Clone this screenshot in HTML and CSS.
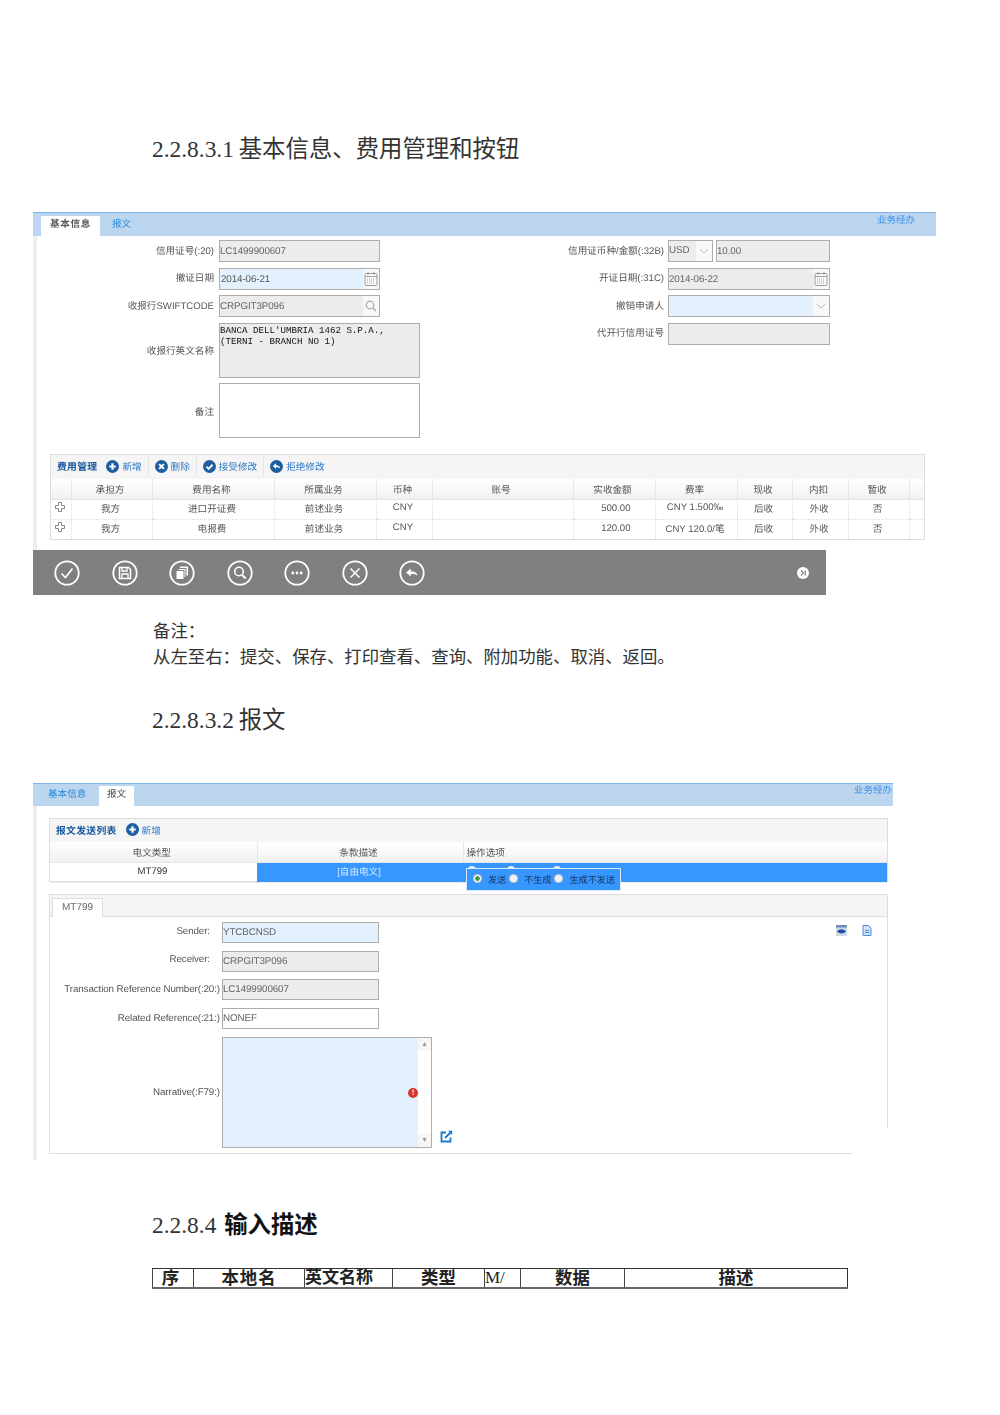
FILE: index.html
```html
<!DOCTYPE html>
<html lang="zh">
<head>
<meta charset="utf-8">
<title>2.2.8.3 基本信息</title>
<link rel="stylesheet" href="styles.css">
</head>
<body>
<svg class="sprite" width="0" height="0" aria-hidden="true">
  <defs>
    <symbol id="add" viewBox="0 0 12 12"><circle cx="6" cy="6" r="6" fill="#1f5e9e"/><path d="M6 3v6M3 6h6" stroke="#fff" stroke-width="2"/></symbol>
    <symbol id="del" viewBox="0 0 12 12"><circle cx="6" cy="6" r="6" fill="#1f5e9e"/><path d="M3.8 3.8l4.4 4.4M8.2 3.8l-4.4 4.4" stroke="#fff" stroke-width="1.8"/></symbol>
    <symbol id="ok" viewBox="0 0 12 12"><circle cx="6" cy="6" r="6" fill="#1f5e9e"/><path d="M3.2 6.2l2 2 3.6-4" fill="none" stroke="#fff" stroke-width="1.7"/></symbol>
    <symbol id="rej" viewBox="0 0 12 12"><circle cx="6" cy="6" r="6" fill="#1f5e9e"/><path d="M2.6 5.6L5.6 3v1.8c2.2 0 3.6 1 3.8 3-1-1-2.2-1.2-3.8-1.2V8.4z" fill="#fff"/></symbol>
    <symbol id="cal" viewBox="0 0 14 15"><rect x="1" y="2.5" width="12" height="12" rx="1" fill="#fff" stroke="#999"/><path d="M1 5.5h12" stroke="#999"/><path d="M4 1v3M10 1v3" stroke="#999"/><path d="M3 8h8M3 10h8M3 12h8" stroke="#999" stroke-dasharray="1 1"/></symbol>
    <symbol id="glass" viewBox="0 0 12 12"><circle cx="5" cy="5" r="3.8" fill="none" stroke="#aaa" stroke-width="1.2"/><path d="M8 8l3 3" stroke="#aaa" stroke-width="1.6"/></symbol>
    <symbol id="chev" viewBox="0 0 10 6"><path d="M1 1l4 4 4-4" fill="none" stroke="#bbb" stroke-width="1"/></symbol>
    <symbol id="plus" viewBox="0 0 10 10"><path d="M3.5.5h3v3h3v3h-3v3h-3v-3h-3v-3h3z" fill="#fff" stroke="#888"/></symbol>
    <symbol id="a-ok" viewBox="0 0 26 26"><circle cx="13" cy="13" r="11.7" fill="none" stroke="#fff" stroke-width="1.8"/><path d="M7.5 13.5l4 4 7-9" fill="none" stroke="#fff" stroke-width="1.6"/></symbol>
    <symbol id="a-save" viewBox="0 0 26 26"><circle cx="13" cy="13" r="11.7" fill="none" stroke="#fff" stroke-width="1.8"/><path d="M7.5 7.5h9l2 2v9h-11z" fill="none" stroke="#fff" stroke-width="1.5"/><path d="M10 7.5v3.5h5V7.5M10 18.5v-4.5h6v4.5" fill="none" stroke="#fff" stroke-width="1.3"/></symbol>
    <symbol id="a-print" viewBox="0 0 26 26"><circle cx="13" cy="13" r="11.7" fill="none" stroke="#fff" stroke-width="1.8"/><rect x="11" y="6.5" width="8" height="9" fill="#fff"/><rect x="9" y="8.5" width="8" height="9" fill="#fff" stroke="#808080"/><rect x="7" y="10.5" width="8" height="9" fill="#fff" stroke="#808080"/></symbol>
    <symbol id="a-find" viewBox="0 0 26 26"><circle cx="13" cy="13" r="11.7" fill="none" stroke="#fff" stroke-width="1.8"/><circle cx="12" cy="11.5" r="4.3" fill="none" stroke="#fff" stroke-width="1.6"/><path d="M15 15l3.8 3.6" stroke="#fff" stroke-width="2"/></symbol>
    <symbol id="a-more" viewBox="0 0 26 26"><circle cx="13" cy="13" r="11.7" fill="none" stroke="#fff" stroke-width="1.8"/><circle cx="8.8" cy="13" r="1.4" fill="#fff"/><circle cx="13" cy="13" r="1.4" fill="#fff"/><circle cx="17.2" cy="13" r="1.4" fill="#fff"/></symbol>
    <symbol id="a-x" viewBox="0 0 26 26"><circle cx="13" cy="13" r="11.7" fill="none" stroke="#fff" stroke-width="1.8"/><path d="M8.5 8.5l9 9M17.5 8.5l-9 9" stroke="#fff" stroke-width="1.5"/></symbol>
    <symbol id="a-back" viewBox="0 0 26 26"><circle cx="13" cy="13" r="11.7" fill="none" stroke="#fff" stroke-width="1.8"/><path d="M7 12.5l4.8-4v2.8c3.6 0 6.2 1.4 7 4.4-1.6-1.4-3.6-1.8-7-1.8v2.6z" fill="#fff"/></symbol>
    <symbol id="a-next" viewBox="0 0 12 12"><circle cx="6" cy="6" r="6" fill="#fff"/><path d="M4 3.5L6.5 6 4 8.5M8.3 3.5v5" fill="none" stroke="#808080" stroke-width="1.2"/></symbol>
    <symbol id="eye" viewBox="0 0 11 11"><rect width="11" height="11" fill="#cfd8e6"/><rect width="11" height="2.5" fill="#6b8cc0"/><path d="M1 6.5c2.5-3 6.5-3 9 0-2.5 2.5-6.5 2.5-9 0z" fill="#1f4fa8"/></symbol>
    <symbol id="doc" viewBox="0 0 10 11"><path d="M1 .5h5.5l2.5 2.5v7.5H1z" fill="#cfe2f7" stroke="#4a8fd8"/><path d="M3 5.5h4M3 7.5h4" stroke="#4a8fd8"/></symbol>
    <symbol id="link" viewBox="0 0 13 13"><path d="M6 2.5H1.500v9h9V7.500" fill="none" stroke="#1a78d0" stroke-width="1.8"/><path d="M5 8l6-6" stroke="#1a78d0" stroke-width="1.8"/><path d="M8 .8h4.200V5z" fill="#1a78d0"/></symbol>
  </defs>
</svg>

<main class="doc">
  <h2 class="doc-h first-h">2.2.8.3.1 基本信息、费用管理和按钮</h2>

  <section class="shot shot-one">
    <header class="tabbar">
      <div class="tabs">
        <span class="tab active strong">基本信息</span>
        <span class="tab link-tab">报文</span>
      </div>
      <span class="role">业务经办</span>
    </header>
    <div class="shot-body">
      <div class="form-cols">
        <div class="fgrid fgrid-left">
          <label>信用证号(:20)</label>
          <div class="in ro"><span class="val">LC1499900607</span></div>
          <label>撤证日期</label>
          <div class="in ed"><span class="val dark">2014-06-21</span><span class="addon"><svg class="i-cal"><use href="#cal"/></svg></span></div>
          <label>收报行SWIFTCODE</label>
          <div class="in ro"><span class="val">CRPGIT3P096</span><span class="addon"><svg class="i-gl"><use href="#glass"/></svg></span></div>
          <label class="tall-lab">收报行英文名称</label>
          <div class="in ro area mono">BANCA DELL'UMBRIA 1462 S.P.A.,<br>(TERNI - BRANCH NO 1)</div>
          <label class="tall-lab">备注</label>
          <div class="in area"></div>
        </div>
        <div class="fgrid fgrid-right">
          <label>信用证币种/金额(:32B)</label>
          <div class="pair">
            <div class="in ro cur"><span class="val">USD</span><span class="addon"><svg class="i-ch"><use href="#chev"/></svg></span></div>
            <div class="in ro amt"><span class="val">10.00</span></div>
          </div>
          <label>开证日期(:31C)</label>
          <div class="in ro"><span class="val">2014-06-22</span><span class="addon"><svg class="i-cal"><use href="#cal"/></svg></span></div>
          <label>撤销申请人</label>
          <div class="in ed"><span class="val"></span><span class="addon"><svg class="i-ch"><use href="#chev"/></svg></span></div>
          <label>代开行信用证号</label>
          <div class="in ro"></div>
        </div>
      </div>

      <div class="panel fee-panel">
        <div class="toolbar">
          <strong class="tb-title">费用管理</strong>
          <span class="tb-btn"><svg class="i-tb"><use href="#add"/></svg>新增</span>
          <span class="tb-btn"><svg class="i-tb"><use href="#del"/></svg>删除</span>
          <span class="tb-btn"><svg class="i-tb"><use href="#ok"/></svg>接受修改</span>
          <span class="tb-btn last"><svg class="i-tb"><use href="#rej"/></svg>拒绝修改</span>
        </div>
        <table class="grid fee-grid">
          <colgroup><col><col><col><col><col><col><col><col><col><col><col><col></colgroup>
          <thead>
            <tr><th></th><th>承担方</th><th>费用名称</th><th>所属业务</th><th>币种</th><th>账号</th><th>实收金额</th><th>费率</th><th>现收</th><th>内扣</th><th>暂收</th><th></th></tr>
          </thead>
          <tbody>
            <tr><td><svg class="i-plus"><use href="#plus"/></svg></td><td>我方</td><td>进口开证费</td><td>前述业务</td><td>CNY</td><td></td><td class="num">500.00</td><td>CNY 1.500‰</td><td>后收</td><td>外收</td><td>否</td><td></td></tr>
            <tr><td><svg class="i-plus"><use href="#plus"/></svg></td><td>我方</td><td>电报费</td><td>前述业务</td><td>CNY</td><td></td><td class="num">120.00</td><td>CNY 120.0/笔</td><td>后收</td><td>外收</td><td>否</td><td></td></tr>
          </tbody>
        </table>
      </div>
    </div>
    <div class="actionbar">
      <svg class="i-act"><use href="#a-ok"/></svg>
      <svg class="i-act"><use href="#a-save"/></svg>
      <svg class="i-act"><use href="#a-print"/></svg>
      <svg class="i-act"><use href="#a-find"/></svg>
      <svg class="i-act"><use href="#a-more"/></svg>
      <svg class="i-act"><use href="#a-x"/></svg>
      <svg class="i-act"><use href="#a-back"/></svg>
      <svg class="i-next"><use href="#a-next"/></svg>
    </div>
  </section>

  <div class="note">
    <p>备注&#xFF1A;</p>
    <p>从左至右&#xFF1A;提交、保存、打印查看、查询、附加功能、取消、返回。</p>
  </div>

  <h2 class="doc-h second-h">2.2.8.3.2 报文</h2>

  <section class="shot shot-two">
    <header class="tabbar">
      <div class="tabs">
        <span class="tab link-tab">基本信息</span>
        <span class="tab active">报文</span>
      </div>
      <span class="role">业务经办</span>
    </header>
    <div class="shot-body">
      <div class="panel list-panel">
        <div class="toolbar">
          <strong class="tb-title">报文发送列表</strong>
          <span class="tb-btn last"><svg class="i-tb"><use href="#add"/></svg>新增</span>
        </div>
        <table class="grid msg-grid">
          <colgroup><col><col><col></colgroup>
          <thead>
            <tr><th>电文类型</th><th>条款描述</th><th class="left">操作选项</th></tr>
          </thead>
          <tbody>
            <tr>
              <td class="plain">MT799</td>
              <td class="sel">[自由电文]</td>
              <td class="sel opts">
                <div class="radio-under"><span></span><span></span><span></span></div>
                <div class="radio-pop">
                  <span class="radio on"></span><span class="rt">发送</span>
                  <span class="radio"></span><span class="rt">不生成</span>
                  <span class="radio"></span><span class="rt">生成不发送</span>
                </div>
              </td>
            </tr>
          </tbody>
        </table>
      </div>

      <div class="panel detail-panel">
        <div class="strip"><span class="strip-tab">MT799</span></div>
        <div class="detail-tools">
          <svg class="i-eye"><use href="#eye"/></svg>
          <svg class="i-doc"><use href="#doc"/></svg>
        </div>
        <div class="dgrid">
          <label class="pad-lab">Sender:</label>
          <div class="in ed"><span class="val">YTCBCNSD</span></div><span></span>
          <label class="pad-lab">Receiver:</label>
          <div class="in ro"><span class="val">CRPGIT3P096</span></div><span></span>
          <label>Transaction Reference Number(:20:)</label>
          <div class="in ro"><span class="val">LC1499900607</span></div><span></span>
          <label>Related Reference(:21:)</label>
          <div class="in"><span class="val">NONEF</span></div><span></span>
          <label class="tall-lab">Narrative(:F79:)</label>
          <div class="narr">
            <div class="narr-text"><span class="err">!</span></div>
            <div class="scroll"><span class="sc-btn">▴</span><span class="sc-btn">▾</span></div>
          </div>
          <svg class="i-link"><use href="#link"/></svg>
        </div>
      </div>
    </div>
  </section>

  <h2 class="doc-h third-h">2.2.8.4 <b>输入描述</b></h2>

  <table class="desc">
    <colgroup><col><col><col><col><col><col><col></colgroup>
    <tr><th class="seq">序</th><th class="wide">本地名</th><th class="tight">英文名称</th><th>类型</th><th class="tight thin">M/</th><th>数据</th><th>描述</th></tr>
  </table>
</main>
</body>
</html>
```

FILE: styles.css
```css
* { box-sizing: border-box; }
html, body { margin: 0; padding: 0; background: #fff; }
.sprite { position: absolute; }
.doc {
  width: 1000px;
  height: 1415px;
  overflow: hidden;
  font-family: "Liberation Serif", "Noto Sans CJK SC", serif;
  color: #222;
}
.doc-h {
  margin: 0 0 0 152px;
  font-size: 23.4px;
  line-height: 30px;
  font-weight: 400;
  color: #333;
  white-space: nowrap;
  word-spacing: -1px;
}
.doc-h b { font-weight: 700; color: #111; }
.first-h { padding-top: 134px; height: 164px; }
.second-h { margin-top: 35px; }
.third-h { margin-top: 50px; word-spacing: 2px; }

.note { margin: 23px 0 0 153px; font-size: 17.4px; line-height: 26px; color: #333; }
.note p { margin: 0; white-space: nowrap; }

.shot {
  margin-left: 33px;
  font-family: "Liberation Sans", "Noto Sans CJK SC", sans-serif;
  font-size: 9.6px;
  color: #555;
  filter: blur(.4px);
  text-rendering: geometricPrecision;
}
.shot-one { margin-top: 48px; width: 903px; }
.shot-two { margin-top: 48px; width: 860px; }

.tabbar {
  display: flex;
  justify-content: space-between;
  background: #bcd6f0;
  border-top: 1px solid #7fb4ea;
  height: 24px;
}
.shot-two .tabbar { height: 23px; }
.tabs { display: flex; align-items: flex-end; }
.tab { height: 20px; line-height: 17px; white-space: nowrap; }
.active { background: #fff; color: #444; }
.strong { font-weight: 700; letter-spacing: .6px; color: #555; }
.link-tab { color: #2a8bd8; }
.shot-one .tabs { padding-left: 8px; }
.shot-one .tab.active { width: 59px; text-align: center; }
.shot-one .link-tab { margin-left: 12px; }
.shot-two .tabs { padding-left: 15px; }
.shot-two .link-tab { width: 37px; }
.shot-two .tab.active { margin-left: 14px; width: 35px; text-align: center; }
.role { color: #3a8fe6; font-size: 9.5px; line-height: 14px; }
.shot-one .role { margin: 1px 21px 0 0; }
.shot-two .role { margin: 0 1px 0 0; }

.shot-body { border-left: 4px solid #eee; }
.shot-one .shot-body { height: 314px; padding-top: 4px; }
.shot-two .shot-body { height: 354px; padding: 12px 0 0 12px; }

.form-cols { display: flex; }
.fgrid { display: grid; row-gap: 5.5px; align-items: center; }
.fgrid-left { grid-template-columns: 177px 161px; column-gap: 5px; grid-template-rows: 22px 22px 22px 55px 55px; }
.fgrid-right { grid-template-columns: 167px 162px; column-gap: 4px; grid-template-rows: 22px 22px 22px 22px; margin-left: 117px; align-content: start; }
.fgrid label, .dgrid label { text-align: right; white-space: nowrap; }
.fgrid label { margin-top: -3px; }
.fgrid .tall-lab, .dgrid .tall-lab { margin-top: 0; }

.in {
  display: flex;
  height: 100%;
  border: 1px solid #adadad;
  background: #fff;
  overflow: hidden;
}
.ro { background: #ececec; color: #666; }
.ed { background: #e3f0fd; }
.val { flex: 1; padding: 1px 0 0; line-height: 19px; font-size: 9.8px; letter-spacing: -.1px; color: #666; white-space: nowrap; }
.val.dark { padding-left: 1px; color: #555; }
.addon { width: 16px; flex: none; background: #f8f8f8; display: flex; align-items: center; justify-content: center; }
.area { width: 201px; }
.mono { display: block; font-family: "Liberation Mono", monospace; font-size: 9.17px; line-height: 11px; padding: 1px 0 0; color: #111; white-space: nowrap; }
.pair { display: flex; gap: 3px; height: 100%; }
.cur { width: 45px; }
.cur .val { padding-top: 0; }
.amt { flex: 1; }
.i-cal { width: 14px; height: 15px; }
.i-gl { width: 12px; height: 12px; }
.i-ch { width: 10px; height: 6px; }

.panel { border: 1px solid #ddd; background: #fff; }
.fee-panel { margin: 16px 0 0 13px; width: 875px; height: 86px; }
.toolbar {
  display: flex;
  align-items: center;
  height: 24px;
  background: #f5f5f5;
  color: #2a76c6;
  padding: 0 0 2px 6px;
}
.list-panel .toolbar { height: 23px; }
.tb-title { color: #16579c; font-size: 9.8px; letter-spacing: .3px; margin-right: 9px; }
.tb-btn { display: flex; align-items: center; height: 100%; gap: 3px; padding-right: 6px; margin-right: 6px; border-right: 1px solid #e6e6e6; }
.tb-btn.last { border-right: 0; }
.i-tb { width: 13px; height: 13px; }

.grid { width: 100%; table-layout: fixed; border-collapse: collapse; }
.grid th {
  height: 20px;
  padding: 0 3px 0 0;
  font-weight: 400;
  background: linear-gradient(#fff, #f1f1f1);
  border-left: 1px solid #e8e8e8;
  border-bottom: 1px solid #e6e6e6;
  color: #555;
}
.grid td {
  height: 20px;
  padding: 0 2px 3px 0;
  text-align: center;
  border-left: 1px dotted #ddd;
  border-bottom: 1px dotted #ddd;
  color: #555;
}
.grid th:first-child, .grid td:first-child { border-left: 0; }
.grid .num { text-align: right; padding: 0 24px 1px 0; }
.fee-grid col:nth-child(1) { width: 20px; }
.fee-grid col:nth-child(2) { width: 81px; }
.fee-grid col:nth-child(3) { width: 122px; }
.fee-grid col:nth-child(4) { width: 102px; }
.fee-grid col:nth-child(5) { width: 56px; }
.fee-grid col:nth-child(6) { width: 141px; }
.fee-grid col:nth-child(7) { width: 82px; }
.fee-grid col:nth-child(8) { width: 82px; }
.fee-grid col:nth-child(9) { width: 55px; }
.fee-grid col:nth-child(10) { width: 56px; }
.fee-grid col:nth-child(11) { width: 61px; }
.fee-grid col:nth-child(12) { width: 15px; }
.i-plus { width: 10px; height: 10px; vertical-align: middle; }

.actionbar {
  display: flex;
  align-items: center;
  width: 793px;
  height: 45px;
  background: #808080;
  padding: 0 17px 0 21px;
  gap: 31.5px;
}
.i-act { width: 26px; height: 26px; flex: none; }
.i-next { width: 12px; height: 12px; margin-left: auto; flex: none; }

.list-panel { width: 839px; height: 64px; position: relative; }
.msg-grid col:nth-child(1) { width: 207px; }
.msg-grid col:nth-child(2) { width: 206px; }
.msg-grid .left { text-align: left; padding-left: 3px; }
.grid td.plain { color: #333; padding-bottom: 2px; }
.grid td.sel { background: #3797ff; color: #d8eaff; border-left: 0; padding-bottom: 2px; }
.grid td.opts { position: relative; text-align: left; overflow: visible; }
.radio-under { position: absolute; left: 5px; top: 3px; display: flex; gap: 31px; }
.radio-under span { display: block; width: 8px; height: 8px; border-radius: 50%; background: #eee; }
.radio-under span + span + span { margin-left: 7px; }
.radio-pop {
  position: absolute;
  left: 3px;
  top: 5px;
  width: 155px;
  height: 23px;
  display: flex;
  align-items: center;
  padding-left: 6px;
  background: #3797ff;
  border: 1px solid #d6e9ff;
  color: #14325c;
  z-index: 2;
  white-space: nowrap;
}
.radio { width: 9px; height: 9px; border-radius: 50%; background: #f2f2f2; border: 1px solid #ccc; flex: none; margin-top: -2px; }
.radio.on { background: radial-gradient(circle, #3a9a4a 0 2px, #f5f5f5 2.5px); }
.rt { margin: 0 3px 0 6px; font-size: 9.2px; letter-spacing: -.1px; }

.detail-panel { width: 839px; height: 260px; margin-top: 12px; position: relative; }
.detail-panel::after {
  content: "";
  position: absolute;
  right: -2px;
  bottom: -2px;
  width: 37px;
  height: 27px;
  background: #fff;
}
.strip { height: 22px; background: #f5f5f5; border-bottom: 1px solid #ddd; padding: 3px 0 0 2px; margin-bottom: 5px; }
.strip-tab {
  display: block;
  width: 51px;
  height: 19px;
  background: #fff;
  border: 1px solid #ddd;
  border-bottom: 0;
  text-align: center;
  line-height: 17px;
  color: #666;
  font-size: 10px;
}
.detail-tools { position: absolute; right: 15px; top: 30px; display: flex; gap: 15px; align-items: center; }
.i-eye { width: 11px; height: 11px; }
.i-doc { width: 10px; height: 11px; }
.dgrid {
  display: grid;
  grid-template-columns: 170px 157px 1fr;
  grid-template-rows: 21px 21px 21px 21px 111px;
  column-gap: 2px;
  row-gap: 7.65px;
  align-items: center;
}
.dgrid .in { width: 157px; }
.dgrid .val { padding-top: 0; }
.dgrid label { font-size: 9.8px; letter-spacing: -.1px; }
.dgrid .pad-lab { padding-right: 10px; margin-top: -3px; }
.narr { grid-column: 2; width: 210px; height: 111px; border: 1px solid #adadad; display: flex; align-self: start; background: #fff; }
.narr-text { flex: 1; background: #e3f0fd; position: relative; }
.err {
  position: absolute;
  right: 0;
  top: 50px;
  width: 10px;
  height: 10px;
  border-radius: 50%;
  background: #d9352a;
  color: #fff;
  font-size: 8px;
  font-weight: 700;
  line-height: 10px;
  text-align: center;
}
.scroll { width: 13px; display: flex; flex-direction: column; justify-content: space-between; }
.sc-btn { height: 13px; font-size: 8px; line-height: 12px; text-align: center; color: #999; background: #f6f6f6; }
.i-link { width: 13px; height: 13px; align-self: end; margin: 0 0 5px 59px; }

.desc {
  margin: 28px 0 0 152px;
  width: 696px;
  height: 21px;
  table-layout: fixed;
  border-collapse: collapse;
  border: 1px solid #333;
  border-bottom: 2px solid #666;
}
.desc col:nth-child(1) { width: 41px; }
.desc col:nth-child(2) { width: 111px; }
.desc col:nth-child(3) { width: 88px; }
.desc col:nth-child(4) { width: 92px; }
.desc col:nth-child(5) { width: 36px; }
.desc col:nth-child(6) { width: 104px; }
.desc th {
  padding: 0;
  border-left: 1px solid #444;
  font-size: 17.4px;
  line-height: 18px;
  font-weight: 700;
  color: #222;
  overflow: visible;
  white-space: nowrap;
}
.desc th.seq { padding-right: 5px; }
.desc th.wide { letter-spacing: 1px; }
.desc th.tight { text-align: left; font-size: 17px; }
.desc th.thin { font-weight: 400; }
```
